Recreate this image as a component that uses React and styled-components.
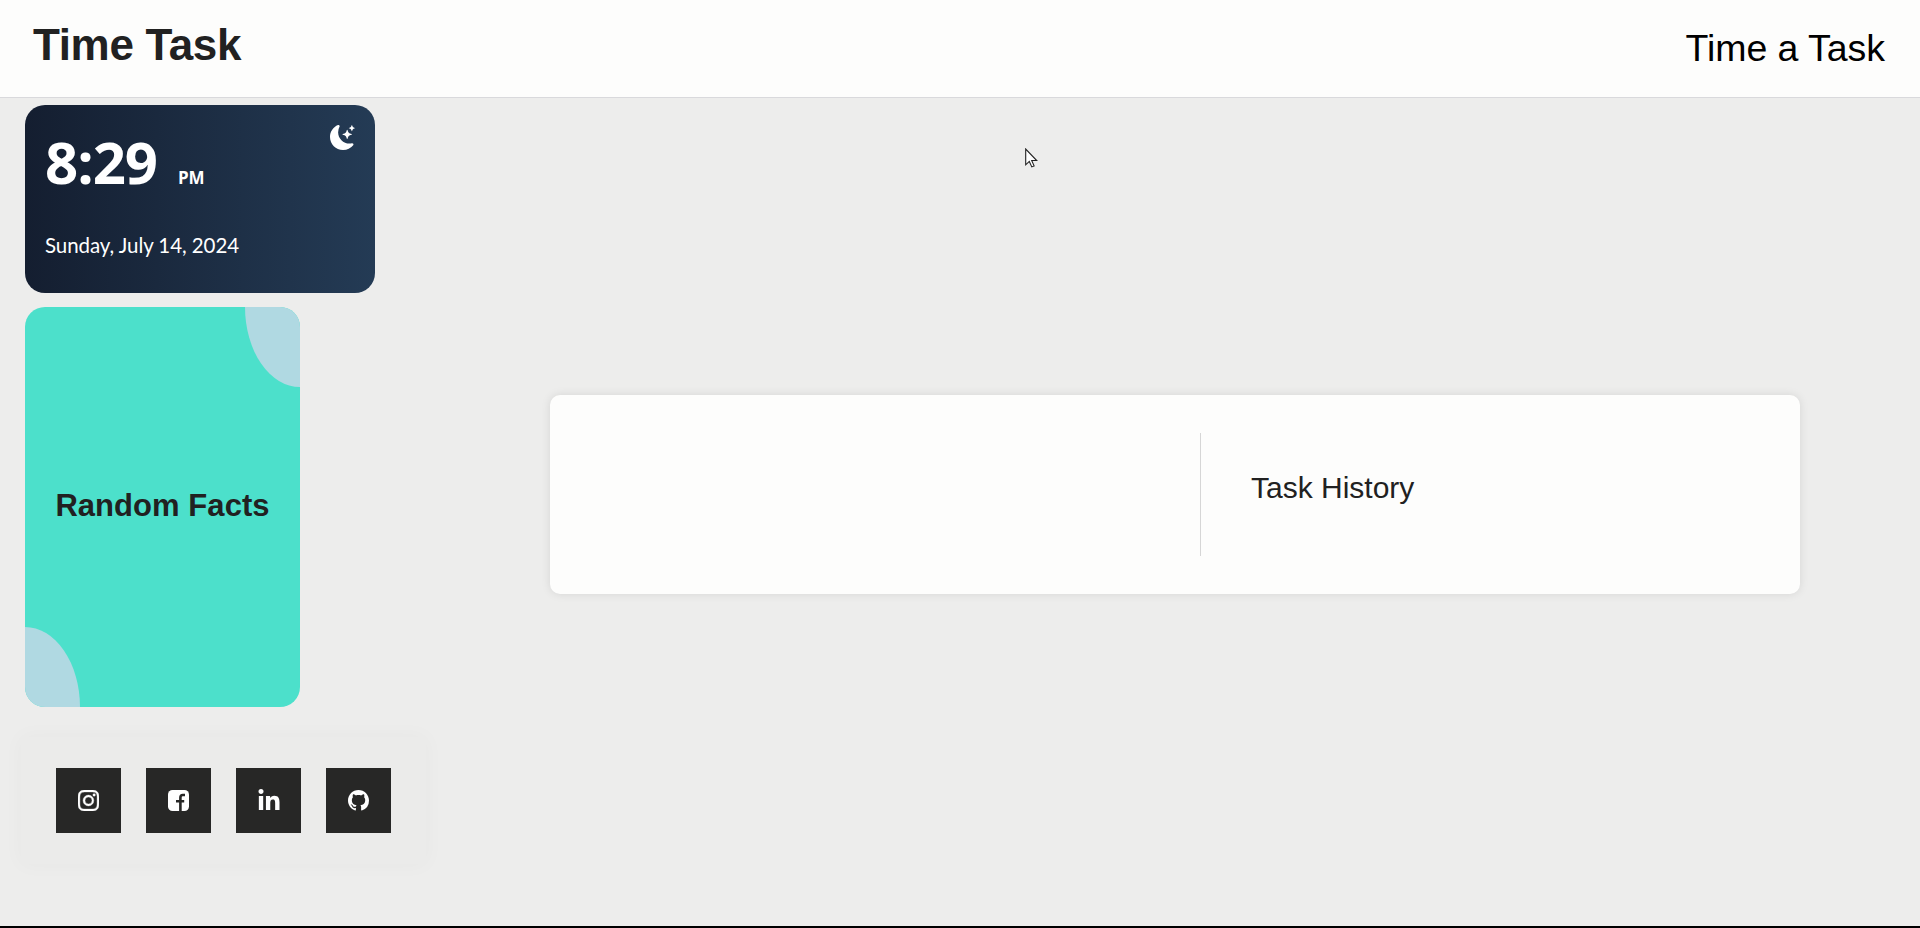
import React from "react";
import styled, { createGlobalStyle } from "styled-components";
import { BsMoonStarsFill, BsInstagram, BsGithub } from "react-icons/bs";
import { FaLinkedinIn } from "react-icons/fa6";

const GlobalStyle = createGlobalStyle`
  * { box-sizing: border-box; }
  body { margin: 0; background: #ededec; font-family: "Liberation Sans", Arial, sans-serif; color: #212121; }
  h1, h2, h3, p { margin: 0; }
`;

const Page = styled.div`
  display: flex;
  flex-direction: column;
  height: 928px;
  overflow: hidden;
  position: relative;
  border-bottom: 2px solid #000;
`;

const Header = styled.header`
  display: flex;
  justify-content: space-between;
  flex: none;
  height: 98px;
  padding: 0 35px 0 33px;
  background: #fdfdfc;
  border-bottom: 1px solid #d9d9dc;
`;

const Brand = styled.h1`
  font-size: 44px;
  line-height: 50px;
  letter-spacing: -0.35px;
  padding-top: 20px;
`;

const NavTitle = styled.p`
  font-size: 37.5px;
  line-height: 44px;
  letter-spacing: -0.05px;
  padding-top: 26px;
  color: #000;
`;

const Main = styled.main`
  display: flex;
  flex: 1;
`;

const Sidebar = styled.aside`
  display: flex;
  flex-direction: column;
  align-items: flex-start;
  gap: 14px;
  width: 550px;
  padding: 7px 0 0 25px;
`;

const ClockCard = styled.section`
  position: relative;
  width: 350px;
  height: 188px;
  padding: 21px 20px;
  border-radius: 20px;
  background: linear-gradient(to right, #141e30, #243b55);
  color: #fff;
  font-family: Lato, Calibri, sans-serif;
`;

const TimeRow = styled.div`
  display: flex;
  align-items: baseline;
  gap: 21px;
  height: 72px;
  line-height: 71px;
  font-family: "Open Sans", Calibri, sans-serif;
  font-weight: 700;
`;

const Time = styled.span`
  font-size: 58px;
  letter-spacing: -1px;
`;

const Meridiem = styled.span`
  font-size: 17px;
  letter-spacing: -0.2px;
`;

const DateText = styled.p`
  margin-top: 33px;
  font-size: 20.5px;
  line-height: 28px;
  letter-spacing: -0.07px;
`;

const Moon = styled(BsMoonStarsFill)`
  position: absolute;
  top: 20px;
  right: 20px;
  width: 25px;
  height: 25px;
`;

const FactsCard = styled.section`
  position: relative;
  display: flex;
  align-items: center;
  justify-content: center;
  width: 275px;
  height: 400px;
  padding-bottom: 2px;
  border-radius: 20px;
  background: #4ce0cb;
  overflow: hidden;

  &::before,
  &::after {
    content: "";
    position: absolute;
    width: 20%;
    height: 20%;
    background: #b0d9e2;
  }
  &::before {
    top: 0;
    right: 0;
    border-bottom-left-radius: 100%;
  }
  &::after {
    bottom: 0;
    left: 0;
    border-top-right-radius: 100%;
  }
`;

const FactsTitle = styled.h2`
  font-size: 31px;
  line-height: 36px;
  letter-spacing: 0.05px;
  white-space: nowrap;
`;

const SocialCard = styled.nav`
  display: flex;
  gap: 25px;
  margin-top: 16px;
  margin-left: -4px;
  padding: 31px 35px;
  background: #ebebea;
  box-shadow: 0 0 20px rgba(0, 0, 0, 0.03);
`;

const SocialButton = styled.a`
  display: flex;
  align-items: center;
  justify-content: center;
  width: 65px;
  height: 65px;
  background: #272726;
  color: #fff;

  svg {
    width: ${(p) => p.$icon || 21}px;
    height: ${(p) => p.$icon || 21}px;
  }
`;

const InstagramIcon = styled(BsInstagram)`
  stroke-width: 0.3;
`;

function FacebookIcon() {
  return (
    <svg viewBox="0 0 21 21" fill="none">
      <rect width="21" height="21" rx="4.5" fill="#fff" />
      <path d="M17 5h-2.2Q12.4 5 12.4 7.6V21M8 11.3h8.2" stroke="#272726" strokeWidth="2.6" />
    </svg>
  );
}

const TaskPanel = styled.section`
  display: flex;
  align-items: center;
  width: 1250px;
  height: 199px;
  margin-top: 297px;
  border-radius: 10px;
  background: #fdfdfc;
  box-shadow: 0 0 10px rgba(0, 0, 0, 0.1);
`;

const TimerArea = styled.div`
  width: 650px;
`;

const History = styled.div`
  height: 123px;
  padding: 38px 50px;
  border-left: 1px solid #d6d6d6;
`;

const HistoryTitle = styled.h3`
  font-size: 30px;
  font-weight: 400;
  line-height: 34px;
`;

const Cursor = styled.svg`
  position: absolute;
  left: 1025px;
  top: 148px;
  width: 13px;
  height: 20px;
`;

export default function App() {
  return (
    <Page>
      <GlobalStyle />
      <Header>
        <Brand>Time Task</Brand>
        <NavTitle>Time a Task</NavTitle>
      </Header>
      <Main>
        <Sidebar>
          <ClockCard>
            <TimeRow>
              <Time>8:29</Time>
              <Meridiem>PM</Meridiem>
            </TimeRow>
            <DateText>Sunday, July 14, 2024</DateText>
            <Moon />
          </ClockCard>
          <FactsCard>
            <FactsTitle>Random Facts</FactsTitle>
          </FactsCard>
          <SocialCard>
            <SocialButton aria-label="Instagram"><InstagramIcon /></SocialButton>
            <SocialButton aria-label="Facebook"><FacebookIcon /></SocialButton>
            <SocialButton aria-label="LinkedIn" $icon={24}><FaLinkedinIn /></SocialButton>
            <SocialButton aria-label="GitHub"><BsGithub /></SocialButton>
          </SocialCard>
        </Sidebar>
        <TaskPanel>
          <TimerArea />
          <History>
            <HistoryTitle>Task History</HistoryTitle>
          </History>
        </TaskPanel>
      </Main>
      <Cursor viewBox="0 0 13 20">
        <path d="M.7 1v15.8l3.6-3.4 2.5 5.5 2.3-1-2.4-5.4h5z" fill="#fff" stroke="#222" strokeWidth="1.1" />
      </Cursor>
    </Page>
  );
}
